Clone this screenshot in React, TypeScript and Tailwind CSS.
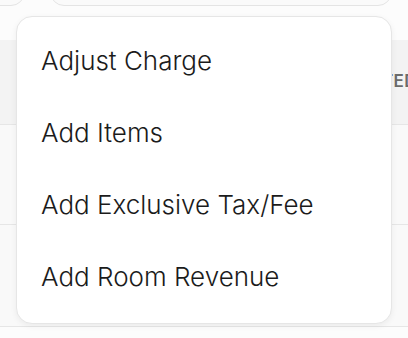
import React from 'react';

const items = ['Adjust Charge', 'Add Items', 'Add Exclusive Tax/Fee', 'Add Room Revenue'];

const App = () => {
  return (
    <div
      className="relative w-[408px] h-[338px] overflow-hidden bg-[#fcfcfc]"
      style={{ fontFamily: 'Inter, "Noto Sans", sans-serif' }}
    >
      {/* Toolbar buttons peeking in from above */}
      <div className="flex h-[40px] gap-[25px] items-start">
        <div className="-ml-[20px] -mt-[30px] h-[36px] w-[45px] rounded-[14px] border border-[#e4e4e4] bg-[#fafafa]" />
        <div className="-mt-[30px] h-[36px] w-[342px] rounded-[14px] border border-[#e4e4e4] bg-[#fafafa]" />
      </div>

      {/* Table header */}
      <div className="flex h-[85px] items-center justify-end overflow-hidden bg-[#f3f3f3] border-b border-[#e6e6e6]">
        <span className="whitespace-nowrap text-[17px] font-semibold tracking-wide text-[#6b6b6b] -mr-[9px]">
          POSTED
        </span>
      </div>

      {/* Table rows */}
      <div className="h-[100px] bg-[#f9f9f9] border-b border-[#e6e6e6]" />
      <div className="h-[102px] bg-[#f9f9f9] border-b border-[#e6e6e6]" />

      {/* Dropdown menu */}
      <div className="absolute left-[16px] top-[16px] w-[376px] h-[308px] rounded-[16px] border border-[#e6e6e6] bg-white pt-[8px] pb-[12px] shadow-[0_2px_6px_rgba(0,0,0,0.06)]">
        {items.map((label) => (
          <div
            key={label}
            className="flex h-[72px] items-center px-[24px] text-[26px] font-[350] leading-none text-[#1b1b1b]"
          >
            {label}
          </div>
        ))}
      </div>
    </div>
  );
};

export default App;
